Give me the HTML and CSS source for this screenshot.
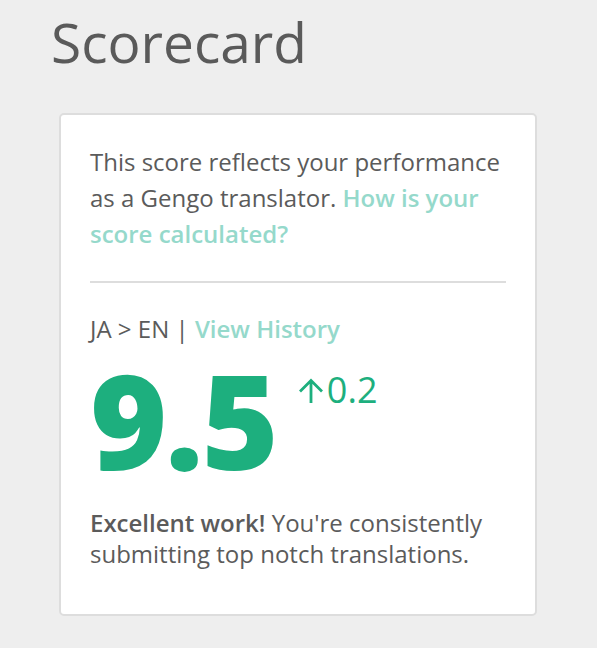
FILE: index.html
```html
<!DOCTYPE html>
<html>
<head>
<meta charset="utf-8">
<link rel="stylesheet" href="styles.css">
</head>
<body>
<main class="page">
  <h1 class="title">Scorecard</h1>
  <section class="card">
    <p class="intro">This score reflects your performance as a Gengo translator. <a class="link" href="#">How is your score calculated?</a></p>
    <hr class="divider">
    <p class="pair">JA &gt; EN | <a class="link" href="#">View History</a></p>
    <div class="score-row">
      <span class="score">9.5</span>
      <span class="delta"><svg class="arrow" width="26" height="25" viewBox="0 0 26 25"><path d="M13 25V2.5M2 13.5L13 2.5L24 13.5" fill="none" stroke="currentColor" stroke-width="2.8"/></svg>0.2</span>
    </div>
    <p class="note"><strong>Excellent work!</strong> You're consistently submitting top notch translations.</p>
  </section>
</main>
</body>
</html>
```
FILE: styles.css
```css
html, body {
  margin: 0;
  padding: 0;
  background: #eeeeee;
}
body {
  font-family: "Open Sans", "Noto Sans", sans-serif;
  color: #5b5b5b;
}
.page {
  padding: 0 60px 0 59px;
}
.title {
  margin: 0 0 0 -8px;
  padding: 10px 0 0 0;
  font-size: 55px;
  font-weight: 400;
  line-height: 64px;
  color: #5a5a5a;
}
.card {
  margin-top: 39px;
  box-sizing: border-box;
  width: 478px;
  background: #fff;
  border: 2px solid #dddddd;
  border-radius: 5px;
  padding: 29px 29px 45px 29px;
}
.intro {
  margin: 0;
  font-size: 24px;
  line-height: 36px;
}
.link {
  color: #95d9cb;
  font-weight: 600;
  text-decoration: none;
}
.divider {
  border: 0;
  border-top: 2px solid #dddddd;
  height: 0;
  margin: 29px 0 31px 0;
}
.pair {
  margin: 0;
  font-size: 24px;
  line-height: 30px;
}
.score-row {
  display: flex;
  align-items: flex-start;
}
.score {
  font-size: 132px;
  font-weight: 800;
  color: #1daf7e;
  line-height: 150px;
  letter-spacing: -2px;
}
.delta {
  display: flex;
  align-items: center;
  color: #1daf7e;
  font-size: 36px;
  line-height: 40px;
  margin-top: 26px;
  margin-left: 21px;
}
.arrow {
  margin-right: 3px;
}
.note {
  margin: 13px 0 0 0;
  font-size: 24px;
  line-height: 31px;
}
.note strong {
  font-weight: 600;
}
```
